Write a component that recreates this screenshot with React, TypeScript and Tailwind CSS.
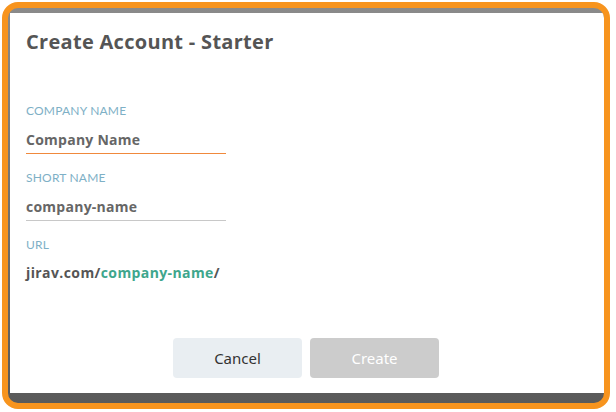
import React from 'react';

const labelCls = "text-[12px] leading-4 text-[#7eb0c6] tracking-[0.2px] uppercase";
const inputCls = "mt-[11px] w-[200px] pb-[3px] border-b text-[14px] leading-5 font-bold tracking-[0.25px] text-[#666] font-['Open_Sans',sans-serif]";

const Field = ({ label, value, line, first }: { label: string; value: string; line: string; first?: boolean }) => (
  <div className={first ? '' : 'mt-4'}>
    <div className={labelCls}>{label}</div>
    <div className={`${inputCls} ${line}`}>{value}</div>
  </div>
);

export default function App() {
  return (
    <div className="w-[616px] h-[412px] bg-white pt-[2px] pl-[2px] pr-[6px] pb-[3px]" style={{ fontFamily: 'Lato, "Open Sans", sans-serif' }}>
      <div className="h-full rounded-[16px] border-[6px] border-[#f7941e] overflow-hidden bg-gradient-to-b from-[#8a8a8a] to-[#5a5a5a] pt-[5px] pl-[2px] pb-[10px]">
        <div className="h-full bg-white flex flex-col pl-4 pt-[17px] pb-[15px]">
          <h1 className="text-[20px] leading-6 font-bold tracking-[0.3px] text-[#555] font-['Open_Sans',sans-serif]">Create Account - Starter</h1>

          <div className="mt-[49px]">
            <Field first label="Company Name" value="Company Name" line="border-[#f0893c]" />
            <Field label="Short Name" value="company-name" line="border-[#c8c8c8]" />
            <div className="mt-4">
              <div className={labelCls}>URL</div>
              <div className="mt-[10px] text-[14px] leading-5 font-bold tracking-[0.4px] text-[#555] font-['Open_Sans',sans-serif]">
                jirav.com/<span className="text-[#3ea68c]">company-name</span>/
              </div>
            </div>
          </div>

          <div className="mt-auto flex justify-center gap-2 pr-[18px]" style={{ fontFamily: '"Noto Sans", "Open Sans", sans-serif' }}>
            <button className="w-[129px] h-10 rounded bg-[#e9eef2] text-[15px] text-[#333]">Cancel</button>
            <button className="w-[129px] h-10 rounded bg-[#cccccc] text-[15px] text-white">Create</button>
          </div>
        </div>
      </div>
    </div>
  );
}
